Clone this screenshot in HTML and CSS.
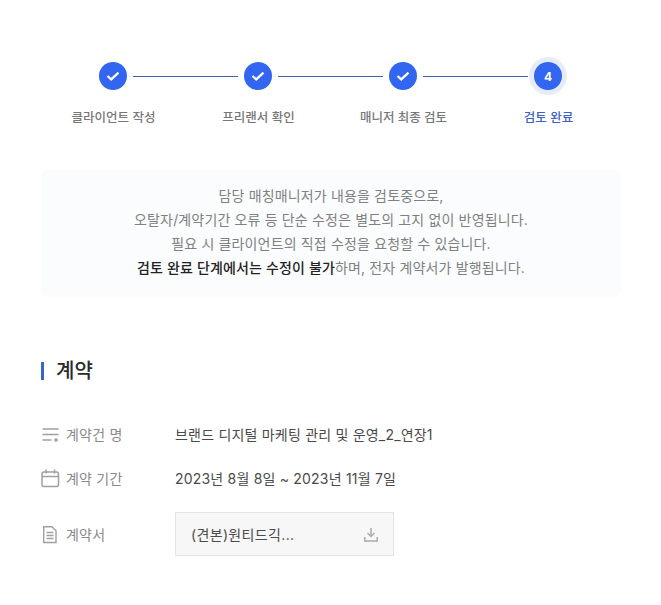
FILE: index.html
```html
<!DOCTYPE html>
<html lang="ko">
<head>
    <meta charset="UTF-8">
    <meta name="viewport" content="width=device-width, initial-scale=1.0">
    <title>계약 검토</title>
    <link rel="stylesheet" href="styles.css">
</head>
<body>
    <div class="page">
        <div class="steps-track">
            <span class="step-dot"><svg width="14" height="10" viewBox="0 0 14 10"><path d="M1.5 5l3.7 3.4L12.5 1.6" fill="none" stroke="#fff" stroke-width="2.2"/></svg></span>
            <span class="step-line"></span>
            <span class="step-dot"><svg width="14" height="10" viewBox="0 0 14 10"><path d="M1.5 5l3.7 3.4L12.5 1.6" fill="none" stroke="#fff" stroke-width="2.2"/></svg></span>
            <span class="step-line"></span>
            <span class="step-dot"><svg width="14" height="10" viewBox="0 0 14 10"><path d="M1.5 5l3.7 3.4L12.5 1.6" fill="none" stroke="#fff" stroke-width="2.2"/></svg></span>
            <span class="step-line"></span>
            <span class="step-dot step-dot-current">4</span>
        </div>
        <div class="steps-labels">
            <span>클라이언트 작성</span>
            <span>프리랜서 확인</span>
            <span>매니저 최종 검토</span>
            <span class="step-label-current">검토 완료</span>
        </div>

        <div class="notice">
            <p>담당 매칭매니저가 내용을 검토중으로,</p>
            <p>오탈자/계약기간 오류 등 단순 수정은 별도의 고지 없이 반영됩니다.</p>
            <p>필요 시 클라이언트의 직접 수정을 요청할 수 있습니다.</p>
            <p><strong>검토 완료 단계에서는 수정이 불가</strong>하며, 전자 계약서가 발행됩니다.</p>
        </div>

        <h2 class="section-title">계약</h2>

        <div class="info-row">
            <div class="info-label">
                <svg class="info-icon" width="20" height="20" viewBox="0 0 20 20" fill="none" stroke="#a0a0a0" stroke-width="1.300"><path d="M1.500 5h16M1.500 10.500h16M1.500 16h9"/><path d="M15 14v4M13 16h4" stroke-width="1.400"/></svg>
                <span>계약건 명</span>
            </div>
            <div class="info-value">브랜드 디지털 마케팅 관리 및 운영_2_연장1</div>
        </div>
        <div class="info-row">
            <div class="info-label">
                <svg class="info-icon" width="20" height="20" viewBox="0 0 20 20" fill="none" stroke="#a0a0a0" stroke-width="1.500"><rect x="1" y="4" width="16.500" height="14.500" rx="2"/><path d="M1 8.500h16.500M5 1.500v4M13.500 1.500v4"/></svg>
                <span>계약 기간</span>
            </div>
            <div class="info-value">2023년 8월 8일 ~ 2023년 11월 7일</div>
        </div>
        <div class="info-row info-row-file">
            <div class="info-label">
                <svg class="info-icon" width="20" height="20" viewBox="0 0 20 20" fill="none" stroke="#a0a0a0" stroke-width="1.400"><path d="M2.700 2.700h8.300l4 4v11.800H2.700z"/><path d="M5.500 8.500h7M5.500 11.500h7M5.500 14.500h7"/></svg>
                <span>계약서</span>
            </div>
            <div class="file-box">
                <span>(견본)원티드긱...</span>
                <svg width="14" height="15" viewBox="0 0 14 15" fill="none" stroke="#ababab" stroke-width="1.500"><path d="M7 1v8.500M3.500 6L7 9.500 10.500 6M.8 10v4h12.400v-4"/></svg>
            </div>
        </div>
    </div>
</body>
</html>
```

FILE: styles.css
```css
* {
    box-sizing: border-box;
}
body {
    margin: 0;
    background: #fff;
    font-family: Inter, "Noto Sans CJK KR", sans-serif;
}
.page {
    padding: 62px 40px 0 41px;
}
.steps-track {
    display: flex;
    align-items: center;
    padding: 0 59px 0 58px;
}
.step-dot {
    flex: none;
    width: 28px;
    height: 28px;
    border-radius: 50%;
    background: #3366f0;
    color: #fff;
    font-size: 12px;
    font-weight: 700;
    display: flex;
    align-items: center;
    justify-content: center;
}
.step-dot-current {
    box-shadow: 0 0 0 5px #e6ecfb;
}
.step-line {
    flex: 1;
    height: 1px;
    margin: 0 6px;
    background: #3f62a8;
}
.steps-labels {
    display: grid;
    grid-template-columns: repeat(4, 145px);
    margin-top: 19px;
    font-size: 12.500px;
    font-weight: 500;
    line-height: 18px;
    color: #777;
    text-align: center;
}
.step-label-current {
    color: #3f5fc4;
}
.notice {
    margin-top: 42px;
    width: 580px;
    height: 128px;
    padding: 15px 0 0;
    background: #fbfcfe;
    border-radius: 8px;
    text-align: center;
    font-size: 14px;
    letter-spacing: .15px;
    line-height: 24px;
    color: #808080;
}
.notice p {
    margin: 0;
}
.notice strong {
    font-weight: 500;
    color: #222;
}
.section-title {
    margin: 65px 0 0;
    padding-left: 12px;
    border-left: 3px solid #3366c8;
    font-size: 20px;
    font-weight: 500;
    line-height: 18px;
    height: 18px;
    color: #2a2a2a;
    display: flex;
    align-items: center;
}
.info-row {
    display: flex;
    align-items: center;
    height: 24px;
    margin-top: 20px;
}
.section-title + .info-row {
    margin-top: 42px;
}
.info-row-file {
    height: 44px;
    margin-top: 22px;
}
.info-label {
    width: 134px;
    display: flex;
    align-items: center;
    gap: 5px;
    font-size: 14px;
    letter-spacing: .2px;
    color: #8a8a8a;
}
.info-icon {
    flex: none;
}
.info-value {
    font-size: 14px;
    letter-spacing: .2px;
    color: #4a4a4a;
}
.file-box {
    width: 219px;
    height: 44px;
    padding: 0 15px;
    display: flex;
    align-items: center;
    justify-content: space-between;
    background: #f7f7f7;
    border: 1px solid #e4e4e4;
    font-size: 14px;
    letter-spacing: .35px;
    color: #4a4a4a;
}
```
